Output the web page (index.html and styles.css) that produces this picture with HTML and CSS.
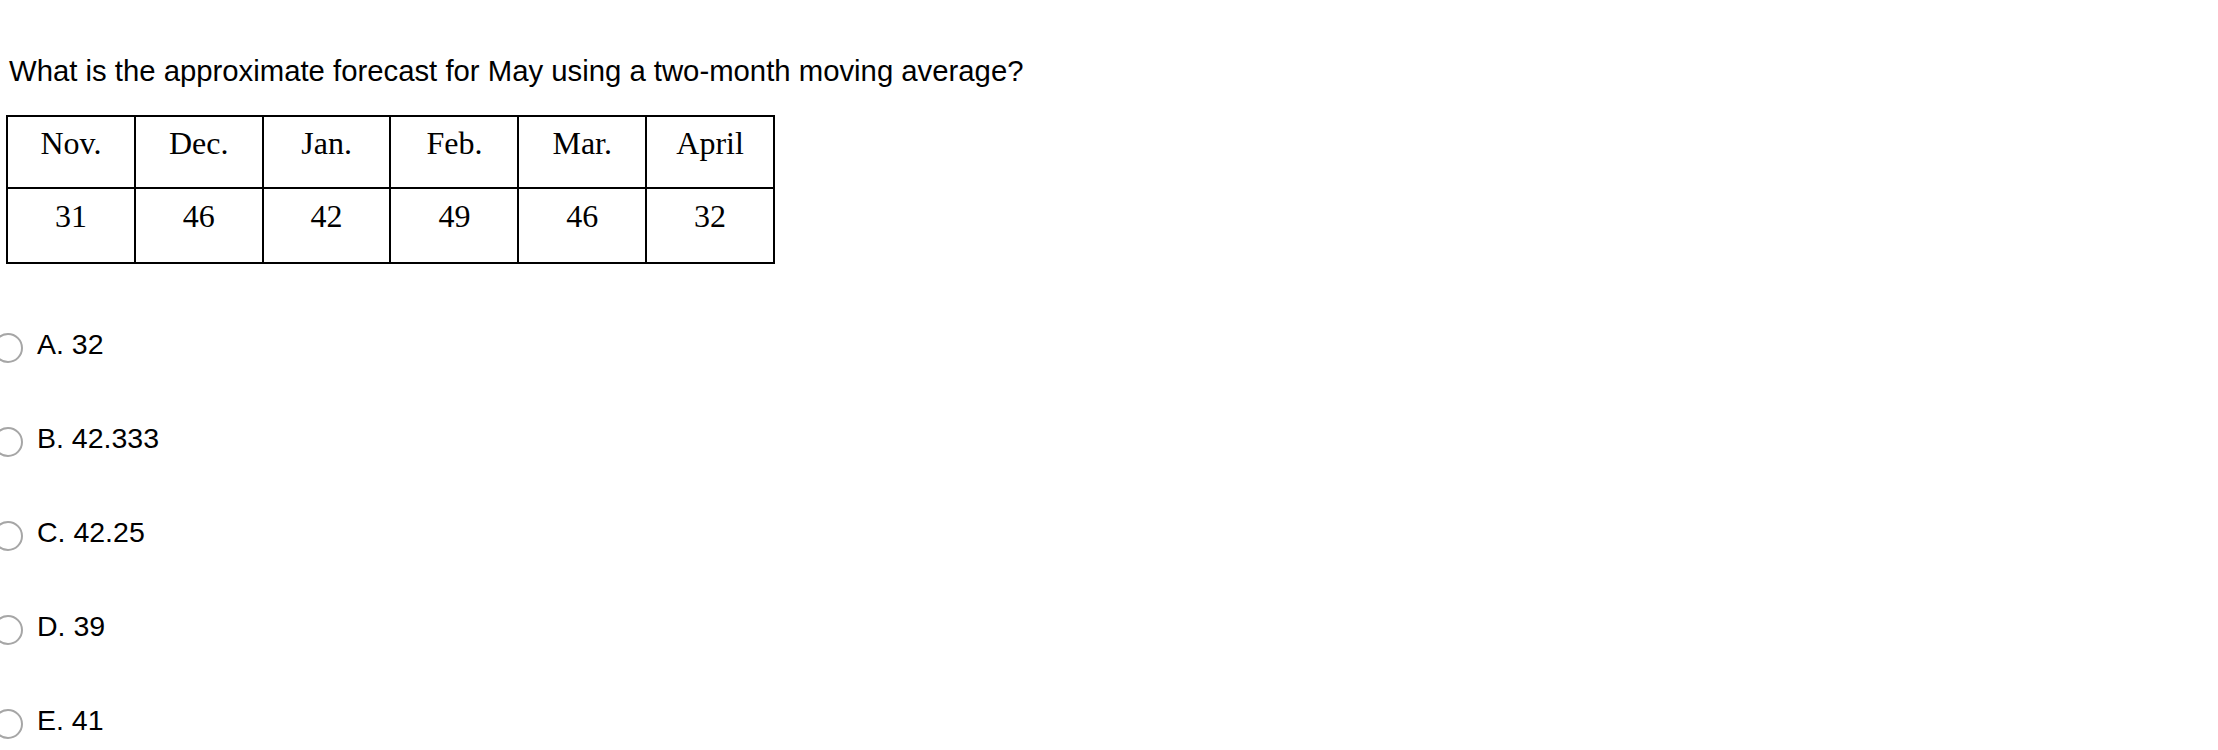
FILE: index.html
```html
<!DOCTYPE html>
<html>
<head>
<meta charset="utf-8">
<link rel="stylesheet" href="styles.css">
</head>
<body>
<div class="page">
  <p class="question">What is the approximate forecast for May using a two-month moving average?</p>
  <table class="data">
    <tr><th>Nov.</th><th>Dec.</th><th>Jan.</th><th>Feb.</th><th>Mar.</th><th>April</th></tr>
    <tr><td>31</td><td>46</td><td>42</td><td>49</td><td>46</td><td>32</td></tr>
  </table>
  <ul class="options">
    <li class="option"><span class="radio"></span><span class="label">A. 32</span></li>
    <li class="option"><span class="radio"></span><span class="label">B. 42.333</span></li>
    <li class="option"><span class="radio"></span><span class="label">C. 42.25</span></li>
    <li class="option"><span class="radio"></span><span class="label">D. 39</span></li>
    <li class="option"><span class="radio"></span><span class="label">E. 41</span></li>
  </ul>
</div>
</body>
</html>
```

FILE: styles.css
```css
html, body {
  margin: 0;
  padding: 0;
  background: #fff;
  overflow: hidden;
}
.page {
  padding: 0 8px;
  color: #000;
  font-family: "Liberation Sans", Arial, sans-serif;
}
.question {
  margin: 0;
  padding-top: 54px;
  padding-left: 1px;
  font-size: 29.3px;
  line-height: 34px;
  white-space: nowrap;
}
.data {
  margin-top: 27px;
  margin-left: -2px;
  border-collapse: collapse;
  table-layout: fixed;
  width: 769px;
  font-family: "Liberation Serif", "Times New Roman", serif;
  font-size: 32px;
  line-height: 37px;
}
.data th, .data td {
  border: 2px solid #000;
  text-align: center;
  vertical-align: top;
  font-weight: normal;
}
.data th {
  padding: 8px 0 25px;
}
.data td {
  padding: 9px 0 27px;
}
.options {
  list-style: none;
  margin: 63px 0 0;
  padding: 0;
  display: flex;
  flex-direction: column;
  gap: 58px;
}
.option {
  display: flex;
  align-items: flex-start;
  gap: 14px;
  margin-left: -15px;
}
.radio {
  box-sizing: border-box;
  width: 30px;
  height: 30px;
  margin-top: 6px;
  border: 2px solid #a6a6a6;
  border-radius: 50%;
  flex: none;
}
.label {
  font-size: 28.5px;
  line-height: 34px;
}
```
